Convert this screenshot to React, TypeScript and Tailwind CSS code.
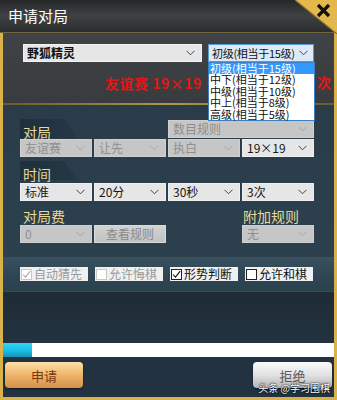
import React from 'react';
import clsx from 'clsx';

const FONT = "font-['Noto_Sans_CJK_SC','Noto_Sans',sans-serif]";

function Chevron({ disabled }: { disabled?: boolean }) {
  return (
    <svg width="9" height="6" viewBox="0 0 9 6" className="shrink-0">
      <polyline
        points="0.5,0.8 4.5,4.8 8.5,0.8"
        fill="none"
        stroke={disabled ? '#a8a8a8' : '#444'}
        strokeWidth="1"
      />
    </svg>
  );
}

function Select({ label, disabled, className }: { label: string; disabled?: boolean; className?: string }) {
  return (
    <div
      className={clsx(
        'flex items-center justify-between h-[18px] pl-[4px] pr-[6px] text-[12px] leading-none',
        disabled ? 'bg-[#c6c6c6] text-[#8e8e8e] border border-[#d0d0d0]' : 'bg-[#e6e6e6] text-[#161616] border border-[#efefef]',
        className
      )}
    >
      <span>{label}</span>
      <Chevron disabled={disabled} />
    </div>
  );
}

function Check({ label, checked, disabled }: { label: string; checked?: boolean; disabled?: boolean }) {
  return (
    <div
      className={clsx(
        'flex items-center h-[14px] bg-[#f0f0f0] pl-[1px] text-[12px] leading-none',
        disabled ? 'text-[#9a9a9a]' : 'text-[#111]'
      )}
    >
      <div
        className={clsx(
          'w-[11px] h-[11px] mr-[2px] flex items-center justify-center bg-white border',
          disabled ? 'border-[#c8c8c8]' : 'border-[#222]'
        )}
      >
        {checked && (
          <svg width="9" height="9" viewBox="0 0 9 9">
            <polyline
              points="1,4.5 3.5,7.2 8.2,1.2"
              fill="none"
              stroke={disabled ? '#a8a8a8' : '#111'}
              strokeWidth="1.1"
            />
          </svg>
        )}
      </div>
      <span>{label}</span>
    </div>
  );
}

function Tab({ label }: { label: string }) {
  return (
    <div className="relative h-[19px] w-[58px]">
      <div className="absolute inset-0 bg-gradient-to-r from-[#1f2f3c] to-[#263846] [clip-path:polygon(0_0,76%_0,100%_100%,0_100%)]" />
      <span className="relative pl-[3px] text-[14px] leading-[19px] text-[#e6d99a]">{label}</span>
    </div>
  );
}

const levels = ['初级(相当于15级)', '中下(相当于12级)', '中级(相当于10级)', '中上(相当于8级)', '高级(相当于5级)'];

export default function App() {
  return (
    <div className={clsx('relative w-[337px] h-[400px] overflow-hidden flex flex-col bg-[#d9b24a]', FONT)}>
      {/* title bar */}
      <div className="relative h-[33px] shrink-0 bg-gradient-to-b from-[#262829] via-[#3f4245] to-[#2a2c2e] border-b border-[#6f6440]">
        <span className="absolute left-[8px] top-[6px] text-[15px] leading-[20px] text-white">申请对局</span>
        <svg width="42" height="34" viewBox="0 0 42 34" className="absolute right-0 top-0">
          <polygon points="0,0 42,0 42,34" fill="#e3b84c" />
          <line x1="0" y1="0" x2="42" y2="34" stroke="#8d6d2a" strokeWidth="1.2" />
          <line x1="23" y1="5" x2="34" y2="16" stroke="#111" strokeWidth="3.2" />
          <line x1="34" y1="5" x2="23" y2="16" stroke="#111" strokeWidth="3.2" />
        </svg>
      </div>

      {/* body with gold frame */}
      <div className="flex-1 flex flex-col mx-[3px] mb-[3px] bg-[#1f2c36]">
        {/* top: opponent + level */}
        <div className="relative h-[70px] shrink-0 bg-gradient-to-b from-[#404346] to-[#393c3f] pl-[20px] pt-[11px]">
          <div className="flex gap-[6px]">
            <div className="flex items-center justify-between w-[179px] h-[18px] bg-[#e6e6e6] border border-[#f2f2f2] pl-[3px] pr-[6px]">
              <span className="text-[12px] leading-none font-bold text-[#111]">野狐精灵</span>
              <Chevron />
            </div>
            <div className="flex items-center justify-between w-[106px] h-[18px] bg-[#dce9f6] border border-[#5b9bd5] pl-[3px] pr-[5px]">
              <span className="text-[11px] leading-none text-[#111] whitespace-nowrap tracking-[-0.3px]">初级(相当于15级)</span>
              <Chevron />
            </div>
          </div>
          <div className="mt-[13px] ml-[82px] h-[16px] whitespace-nowrap text-[14px] leading-[16px] font-bold text-[#e31515] tracking-[0.5px]">
            友谊赛 19×19
          </div>
          <span className="absolute right-[3px] top-[42px] text-[14px] leading-none font-bold text-[#e31515]">次</span>

          {/* open list */}
          <div className="absolute left-[205px] top-[29px] w-[107px] bg-white border border-[#3d7fc4] z-10">
            {levels.map((l, i) => (
              <div
                key={l}
                className={clsx(
                  'h-[11.4px] pl-[1px] text-[11px] leading-[11.4px] whitespace-nowrap',
                  i === 0 ? 'bg-[#3399ff] text-white' : 'text-[#111]'
                )}
              >
                {l}
              </div>
            ))}
          </div>
        </div>

        {/* gold separator */}
        <div className="h-[2px] shrink-0 bg-gradient-to-r from-[#6b5a30] via-[#b3954f] to-[#6b5a30]" />

        {/* options */}
        <div className="h-[152px] shrink-0 bg-gradient-to-b from-[#2a3c49] to-[#2c404d] pl-[17px] pt-[14px]">
          <div className="grid grid-cols-[72px_72px_72px_72px] gap-x-[2px] gap-y-[1px] items-end">
            <Tab label="对局" />
            <div />
            <Select label="数目规则" disabled className="col-span-2 h-[17px]" />
            <Select label="友谊赛" disabled />
            <Select label="让先" disabled />
            <Select label="执白" disabled />
            <Select label="19×19" />
          </div>
          <div className="mt-[4px]">
            <Tab label="时间" />
          </div>
          <div className="grid grid-cols-[72px_72px_72px_72px] gap-x-[2px] mt-[3px]">
            <Select label="标准" />
            <Select label="20分" />
            <Select label="30秒" />
            <Select label="3次" />
          </div>
          <div className="grid grid-cols-[72px_72px_72px_72px] gap-x-[2px] mt-[6px]">
            <span className="pl-[3px] text-[14px] leading-[18px] text-[#e6d99a]">对局费</span>
            <div />
            <div />
            <span className="pl-[1px] text-[14px] leading-[18px] text-[#e6d99a]">附加规则</span>
            <Select label="0" disabled />
            <div className="flex items-center justify-center h-[18px] bg-gradient-to-b from-[#d2d2d2] to-[#c2c2c2] border border-[#dadada] text-[12px] leading-none text-[#8a8a8a]">
              查看规则
            </div>
            <div />
            <Select label="无" disabled />
          </div>
        </div>

        {/* checkbox band */}
        <div className="h-[35px] shrink-0 bg-gradient-to-b from-[#3a525f] via-[#2f4654] to-[#2b414e] border-b border-[#34495a] pl-[17px] pt-[10px]">
          <div className="grid grid-cols-[68px_68px_68px_68px] gap-x-[7px]">
            <Check label="自动猜先" checked disabled />
            <Check label="允许悔棋" disabled />
            <Check label="形势判断" checked />
            <Check label="允许和棋" />
          </div>
        </div>

        {/* empty dark area */}
        <div className="flex-1 bg-gradient-to-b from-[#1f2c36] to-[#223240]" />

        {/* progress */}
        <div className="h-[14px] shrink-0 bg-white flex">
          <div className="w-[29px] h-full bg-gradient-to-b from-[#2fd4f4] via-[#1cc0e8] to-[#1593b8]" />
        </div>

        {/* buttons */}
        <div className="relative h-[40px] shrink-0 flex justify-between items-start px-[2px] pt-[5px] bg-[#223240]">
          <button className="w-[78px] h-[26px] rounded-[4px] bg-gradient-to-b from-[#fbe0a6] via-[#eeb56a] to-[#d3904a] shadow-[0_1px_2px_rgba(0,0,0,0.6)] text-[13px] leading-none text-[#7a3810]">
            申请
          </button>
          <button className="w-[79px] h-[26px] rounded-[4px] bg-gradient-to-b from-[#fafafa] via-[#e2e2e2] to-[#b4b4b4] shadow-[0_1px_2px_rgba(0,0,0,0.6)] text-[13px] leading-none text-[#5a5a5a]">
            拒绝
          </button>
          <span className="absolute right-[4px] top-[26px] text-[10px] leading-none text-white [text-shadow:0_0_2px_#000,0_0_1px_#000]">
            头条 @学习围棋
          </span>
        </div>
      </div>
    </div>
  );
}
